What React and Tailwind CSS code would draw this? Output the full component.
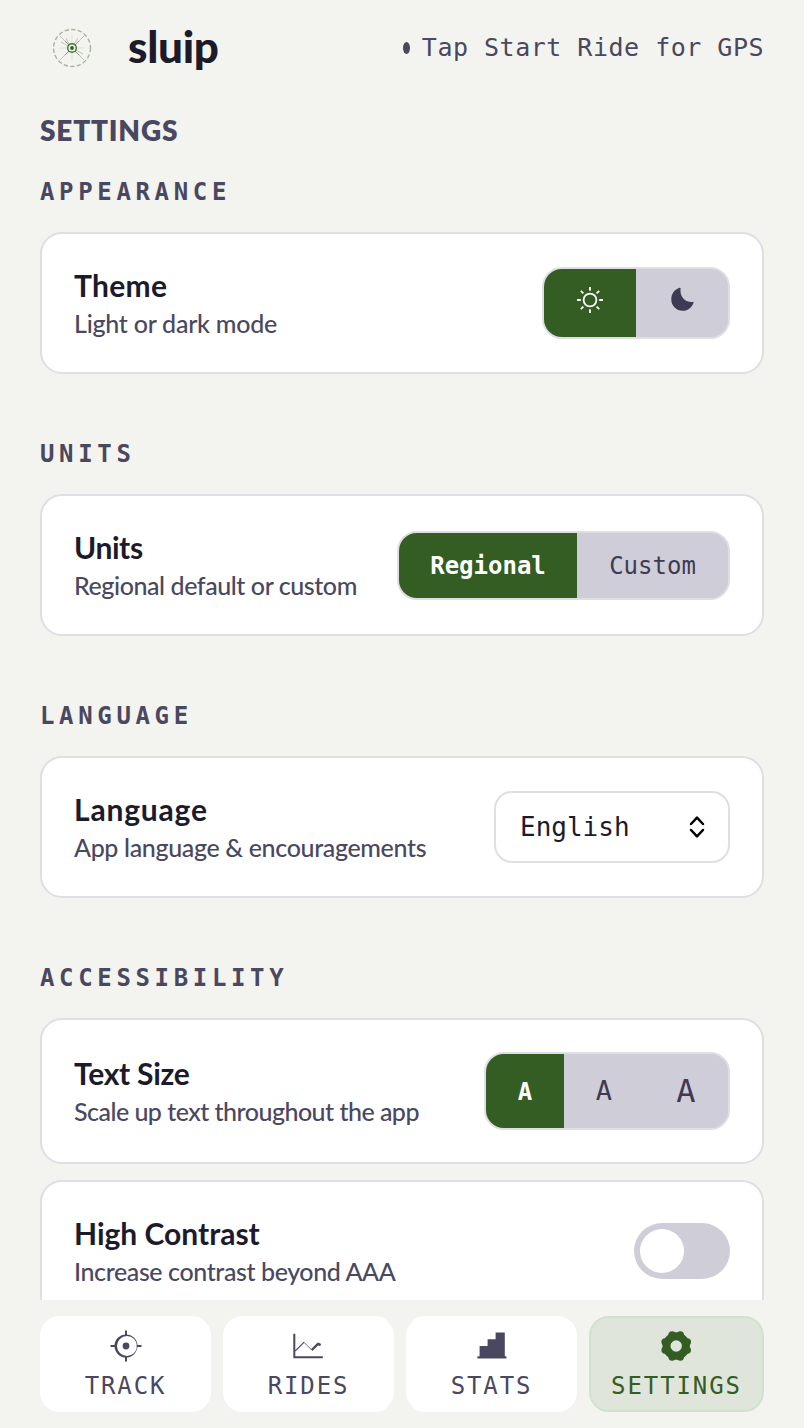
import React, { useState } from 'react';

const SANS = "font-['Lato','Open_Sans',sans-serif]";
const MONO = "font-['DejaVu_Sans_Mono','Liberation_Mono',monospace]";

const LogoMark = () => (
  <svg className="w-10 h-10" viewBox="0 0 40 40" fill="none">
    <circle cx="20" cy="20" r="18.5" stroke="#a9b1a1" strokeWidth="1.4" strokeDasharray="4.3 2.3" />
    <g stroke="#dde0d9" strokeWidth="1">
      <path d="M20 7v9M20 24v9M7 20h9M24 20h9" />
    </g>
    <g stroke="#b8c0b0" strokeWidth="0.9">
      <path d="M8 8l9 9M32 8l-9 9M8 32l9-9M32 32l-9-9M9 14l7 4M26 10l-4 6M14 10l3 6M31 26l-7-4" />
    </g>
    <g stroke="#7f9770" strokeWidth="1">
      <path d="M13 13l4 4M27 13l-4 4M13 27l4-4M27 27l-4-4" />
    </g>
    <circle cx="20" cy="20" r="4.3" fill="#f3f4ef" stroke="#46703a" strokeWidth="1.4" />
    <circle cx="20" cy="20" r="1.9" fill="#28631c" />
  </svg>
);

const SunIcon = () => (
  <svg className="w-7 h-7" viewBox="0 0 28 28" fill="none" stroke="#fff" strokeWidth="1.8">
    <circle cx="14" cy="14" r="6.4" />
    <path d="M14 1v3.7M14 23.3V27M1 14h3.8M23.2 14H27M4.8 4.8l2.6 2.6M20.6 20.6l2.6 2.6M4.8 23.2l2.6-2.6M20.6 7.4l2.6-2.6" />
  </svg>
);

const MoonIcon = () => (
  <svg className="w-7 h-7" viewBox="0 0 28 28" fill="#3d3a54">
    <path d="M12.6 2.4C11.5 9.9 16.6 16.6 25 15.9A.5.5 0 0 1 25.6 16.5C24.1 21.4 19.9 24.8 14.8 24.8A11.4 11.4 0 0 1 3.3 13.4C3.3 7.7 6.7 3.3 11.6 1.8Q12.7 1.5 12.6 2.4Z" />
  </svg>
);

const TrackIcon = () => (
  <svg className="w-8 h-8" viewBox="0 0 32 32" fill="#4a4860">
    <path d="M15 .5h2v4.8h-2zM15 26.7h2v4.8h-2zM.5 15h4.8v2H.5zM26.7 15h4.8v2h-4.8z" />
    <path fillRule="evenodd" d="M16 4.5a11.5 11.5 0 1 1 0 23a11.5 11.5 0 0 1 0-23ZM17 6a10 10 0 1 0 0 20a10 10 0 0 0 0-20Z" />
    <circle cx="16" cy="16" r="3.4" />
  </svg>
);

const RidesIcon = () => (
  <svg className="w-8 h-8" viewBox="0 0 32 32" fill="none" stroke="#4a4860">
    <path d="M1.3 3.8v23.4h28.5" strokeWidth="2" />
    <path d="M2.2 21l9-8.8" strokeWidth="1.1" />
    <path d="M11.2 12.5l8 8" strokeWidth=".8" />
    <path d="M18.8 20l6.7-6.6M24.8 13.6l2.8 1.5" strokeWidth="2.4" />
  </svg>
);

const StatsIcon = () => (
  <svg className="w-8 h-8" viewBox="0 0 32 32" fill="#4a4860">
    <path d="M3.6 16h8V9.2h8V2.4h9.2v23.8h1.6v2.2H1.4v-2.2h2.2z" />
  </svg>
);

const GearIcon = () => (
  <svg className="w-8 h-8" viewBox="0.8 0 32 32" fill="#345d24">
    <circle cx="16" cy="16" r="9.7" fill="none" stroke="#345d24" strokeWidth="8" />
    <circle cx="20.1" cy="4.9" r="3.7" />
    <circle cx="27.1" cy="11.9" r="3.7" />
    <circle cx="27.1" cy="20.1" r="3.7" />
    <circle cx="20.1" cy="27.1" r="3.7" />
    <circle cx="11.9" cy="27.1" r="3.7" />
    <circle cx="4.9" cy="20.1" r="3.7" />
    <circle cx="4.9" cy="11.9" r="3.7" />
    <circle cx="11.9" cy="4.9" r="3.7" />
  </svg>
);

const SelectArrows = () => (
  <svg className="w-5 h-6" viewBox="0 0 20 24" fill="none" stroke="#000" strokeWidth="2.5" strokeLinecap="round" strokeLinejoin="round">
    <path d="M4 9l6-6.3L16 9M4 15l6 6.3L16 15" />
  </svg>
);

const Section = ({ title, children }) => (
  <section className="mb-16">
    <h2 className={`${MONO} text-[24px] leading-8 font-bold tracking-[4.65px] text-[#4a4860] mb-6`}>{title}</h2>
    <div className="flex flex-col gap-4">{children}</div>
  </section>
);

const Card = ({ title, titleClass, text, textClass, height = 'h-[142px]', children }) => (
  <div className={`${height} flex items-center justify-between bg-white border-2 border-[#dedee3] rounded-[22px] px-8`}>
    <div className={`${SANS} pt-0.5 whitespace-nowrap`}>
      <h3 className={`${titleClass} text-[30px] leading-[38px] font-bold text-[#1c1b2c]`}>{title}</h3>
      <p className={`${textClass} text-[25px] leading-[38px] font-medium text-[#4a4860]`}>{text}</p>
    </div>
    {children}
  </div>
);

const Segments = ({ size, children }) => (
  <div className={`${size} ${MONO} flex shrink-0 overflow-hidden bg-[#cfced8] border-2 border-[#dedee3] rounded-[20px]`}>
    {children}
  </div>
);

const Segment = ({ active, width, onClick, children }) => (
  <button
    onClick={onClick}
    className={`${width} flex items-center justify-center ${active ? 'bg-[#345d24] text-white font-bold' : 'bg-[#cfced8] text-[#3d3a54]'}`}
  >
    {children}
  </button>
);

const tabs = [
  { id: 'track', label: 'TRACK', Icon: TrackIcon },
  { id: 'rides', label: 'RIDES', Icon: RidesIcon },
  { id: 'stats', label: 'STATS', Icon: StatsIcon },
  { id: 'settings', label: 'SETTINGS', Icon: GearIcon },
];

const App = () => {
  const [theme, setTheme] = useState('light');
  const [units, setUnits] = useState('regional');
  const [textSize, setTextSize] = useState('small');
  const [contrast, setContrast] = useState(false);
  const [tab, setTab] = useState('settings');

  return (
    <div className="w-[804px] h-[1428px] flex flex-col overflow-hidden bg-[#f3f4ef]">
      <header className="h-24 shrink-0 flex items-center justify-between pl-[52px] pr-10">
        <div className="flex items-center gap-9">
          <LogoMark />
          <span className={`${SANS} pb-1 text-[44px] leading-none font-black tracking-[-0.3px] text-[#1c1b2c]`}>sluip</span>
        </div>
        <div className="flex items-center gap-3 text-[#4a4860]">
          <span className="w-[7px] h-3 rounded-[50%] bg-[#4a4860]" />
          <span className={`${MONO} text-[25px] tracking-[0.5px] whitespace-nowrap`}>Tap Start Ride for GPS</span>
        </div>
      </header>

      <main className="flex-1 min-h-0 overflow-hidden px-10 pt-3.5">
        <h1 className={`${SANS} text-[28px] leading-10 font-extrabold tracking-[0.8px] text-[#4a4860] mb-[26px]`}>SETTINGS</h1>

        <Section title="APPEARANCE">
          <Card title="Theme" titleClass="tracking-[0.3px]" text="Light or dark mode" textClass="tracking-[-0.25px]">
            <Segments size="w-[188px] h-[72px]">
              <Segment width="w-[92px] pb-1.5" active={theme === 'light'} onClick={() => setTheme('light')}><SunIcon /></Segment>
              <Segment width="w-[92px] pb-1.5" active={theme === 'dark'} onClick={() => setTheme('dark')}><MoonIcon /></Segment>
            </Segments>
          </Card>
        </Section>

        <Section title="UNITS">
          <Card title="Units" titleClass="tracking-[-0.4px]" text="Regional default or custom" textClass="tracking-[-0.42px]">
            <Segments size="w-[333px] h-[69px] text-[24px]">
              <Segment width="w-[178px] pt-0.5" active={units === 'regional'} onClick={() => setUnits('regional')}>Regional</Segment>
              <Segment width="w-[151px] pt-0.5" active={units === 'custom'} onClick={() => setUnits('custom')}>Custom</Segment>
            </Segments>
          </Card>
        </Section>

        <Section title="LANGUAGE">
          <Card title="Language" titleClass="tracking-[0.8px]" text="App language & encouragements" textClass="tracking-[-0.35px]">
            <button className={`${MONO} w-[236px] h-[72px] shrink-0 flex items-center justify-between bg-white border-2 border-[#dedee3] rounded-[18px] pl-6 pr-[21px] text-[26px] text-[#1c1b2c]`}>
              English
              <SelectArrows />
            </button>
          </Card>
        </Section>

        <Section title="ACCESSIBILITY">
          <Card title="Text Size" titleClass="tracking-[-0.25px]" text="Scale up text throughout the app" textClass="tracking-[-0.52px]" height="h-[146px]">
            <Segments size="w-[246px] h-[78px]">
              <Segment width="w-[78px] pt-0.5" active={textSize === 'small'} onClick={() => setTextSize('small')}>
                <span className="text-[24px]">A</span>
              </Segment>
              <Segment width="w-[80px]" active={textSize === 'medium'} onClick={() => setTextSize('medium')}>
                <span className="text-[27px]">A</span>
              </Segment>
              <Segment width="w-[84px]" active={textSize === 'large'} onClick={() => setTextSize('large')}>
                <span className="text-[32px]">A</span>
              </Segment>
            </Segments>
          </Card>
          <Card title="High Contrast" titleClass="tracking-[0px]" text="Increase contrast beyond AAA" textClass="tracking-[-0.4px]">
            <button
              onClick={() => setContrast(!contrast)}
              className={`w-24 h-14 shrink-0 flex items-center rounded-full px-1.5 ${contrast ? 'bg-[#345d24] justify-end' : 'bg-[#cfced8]'}`}
            >
              <span className="w-11 h-11 rounded-full bg-white" />
            </button>
          </Card>
        </Section>
      </main>

      <nav className="h-32 shrink-0 grid grid-cols-[171px_171px_171px_175px] gap-3 px-10 py-4">
        {tabs.map(({ id, label, Icon }) => (
          <button
            key={id}
            onClick={() => setTab(id)}
            className={`flex flex-col items-center rounded-[20px] pt-3 border-2 ${tab === id ? 'bg-[#dfe5db] border-[#d0e2cd] text-[#345d24]' : 'bg-white border-white text-[#4a4860]'}`}
          >
            <Icon />
            <span className={`${MONO} text-[24px] leading-8 tracking-[1.9px] mt-2`}>{label}</span>
          </button>
        ))}
      </nav>
    </div>
  );
};

export default App;
